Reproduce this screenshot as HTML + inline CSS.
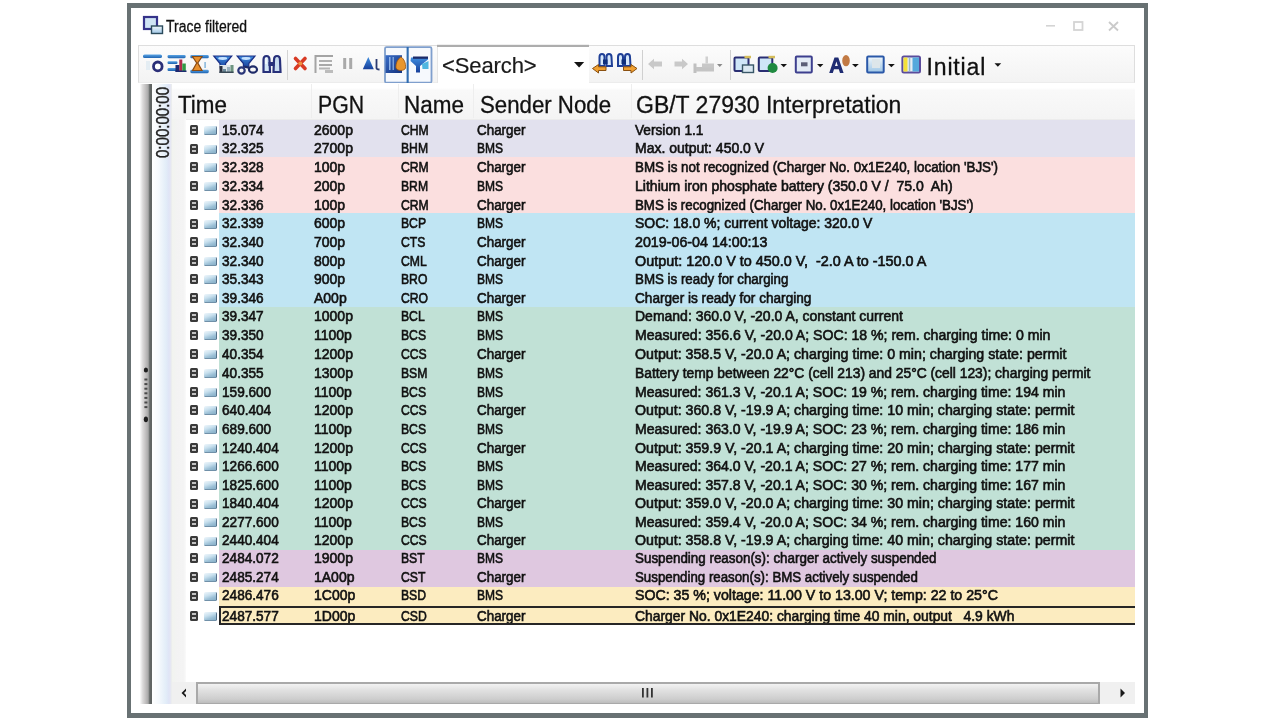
<!DOCTYPE html>
<html><head><meta charset="utf-8"><title>Trace filtered</title>
<style>
*{box-sizing:border-box}
html,body{margin:0;padding:0}
body{width:1280px;height:721px;background:#fff;position:relative;overflow:hidden;font-family:"Liberation Sans",sans-serif;color:#1a1a1a}
.a{position:absolute}
.frame{left:127px;top:3px;width:1021px;height:715px;border:4px solid #687173;border-top-width:5px;border-bottom-width:5px;background:#fff}
.title{left:166px;top:17px;font-size:16px;line-height:20px;white-space:pre;color:#111;transform-origin:0 0;transform:scaleX(0.872);-webkit-text-stroke:0.3px #111}
.tb{left:138px;top:45px;width:997px;height:38px;border:1px solid #dedede;border-bottom-color:#ececec;background:linear-gradient(#fcfcfc,#f3f3f3)}
.sep{width:1px;background:#d4d4d4}
.search{left:437px;top:45px;width:152px;height:38px;background:#fff;border-top:2px solid #b8b8b8;border-left:1px solid #e2e2e2}
.itxt{left:926.5px;top:54px;font-size:23px;line-height:26px;white-space:pre;color:#111;letter-spacing:0.85px;-webkit-text-stroke:0.3px #111}
.stxt{left:442px;top:53px;font-size:22px;line-height:26px;white-space:pre;color:#1a1a1a;letter-spacing:-0.1px;-webkit-text-stroke:0.2px #111}
.hdr{left:171px;top:83px;width:964px;height:37px;background:linear-gradient(#ffffff 0%,#ffffff 14%,#f9f9f9 20%,#f4f4f4 100%);border-bottom:1px solid #ececec}
.hsep{top:84px;width:1px;height:34px;background:#eeeeee}
.ht{top:92px;font-size:23px;line-height:26px;white-space:pre;color:#111;transform-origin:0 0;-webkit-text-stroke:0.3px #111}
.tree{left:171px;top:119px;width:15px;height:563px;background:linear-gradient(90deg,#f1f4ee,#f3f3f3 40%,#f4f4f4 85%,#fafafa)}
.row{left:219px;width:916px}
.c{transform-origin:0 0;font-size:14px;white-space:pre;color:#111;-webkit-text-stroke:0.6px #111}
.gbar{left:140px;top:84px;width:11.5px;height:620px;background:linear-gradient(90deg,#fbfbfb 0%,#dcdbdb 22%,#c4c2c2 45%,#a9a9a9 68%,#626665 82%,#5f6362 100%)}
.lblue{left:151.5px;top:84px;width:20px;height:620px;background:linear-gradient(90deg,#fff 0%,#f4f8fc 35%,#e2edf8 70%,#dfe4f6 85%,#e8e8f2 95%,#eef2ea 100%)}
.vlabel{left:153.5px;top:158px;transform-origin:0 0;transform:rotate(-90deg) scaleX(0.835);font-size:18px;line-height:18px;-webkit-text-stroke:0.45px #222;white-space:pre;color:#222}
.sb{top:682px;height:22px}
.xb{width:8.5px;height:10px;background:#3a3a3a;border-radius:1.5px}
.xb:before{content:"";position:absolute;left:2px;top:1.6px;width:4.3px;height:2.4px;background:#c4c4c4}
.xb:after{content:"";position:absolute;left:2px;top:5.8px;width:4.3px;height:2.4px;background:#c4c4c4}
.mi{width:13px;height:9px;border-radius:1.5px;background:linear-gradient(160deg,#f2f8fc 0%,#c8e0ee 40%,#9cc0d6 70%,#86aec6 100%);border-right:1.5px solid #55708a;border-bottom:1px solid #7090a8}
.sel{left:219px;width:916px;border:2px solid #262626;border-right:none}
.sbtn{background:#f0f0f0}
.thumb{left:196px;top:682px;width:904px;height:22px;border:2px solid #a9a9a9;border-bottom-width:1px;background:linear-gradient(#f2f2f2,#e2e2e2 30%,#cdcdcd 80%,#bdbdbd)}

</style></head>
<body>
<div class="a" style="left:0;top:0;width:1280px;height:721px;overflow:hidden;filter:blur(0.4px)">
<div class="a frame"></div>
<div class="a title">Trace filtered</div>
<div class="a tb"></div>
<svg class="a" style="left:0;top:0" width="1280" height="90" viewBox="0 0 1280 90">
<defs>
<linearGradient id="gb" x1="0" y1="0" x2="0" y2="1"><stop offset="0" stop-color="#5aa4e4"/><stop offset="1" stop-color="#1d62b0"/></linearGradient>
<linearGradient id="gf" x1="0" y1="0" x2="0" y2="1"><stop offset="0" stop-color="#3f8ee0"/><stop offset="1" stop-color="#173f9a"/></linearGradient>
<linearGradient id="gl" x1="0" y1="0" x2="0" y2="1"><stop offset="0" stop-color="#f2f8fc"/><stop offset="1" stop-color="#9ec6e6"/></linearGradient>
<linearGradient id="gsq" x1="0" y1="0" x2="1" y2="1"><stop offset="0" stop-color="#3a6ec8"/><stop offset="1" stop-color="#12327e"/></linearGradient>
</defs>
<!-- title icon -->
<rect x="144" y="17" width="13" height="12" fill="#cfe4f4" stroke="#35338a" stroke-width="2.2"/>
<rect x="151.5" y="26" width="11" height="7.5" fill="url(#gl)" stroke="#2c4b5c" stroke-width="1.4"/>
<!-- window controls -->
<rect x="1046" y="25" width="9" height="1.6" fill="#d4d4d4"/>
<rect x="1074" y="22" width="8.5" height="8" fill="none" stroke="#d4d4d4" stroke-width="1.8"/>
<path d="M1109 22 L1118 30.5 M1118 22 L1109 30.5" stroke="#cacaca" stroke-width="1.8"/>
<!-- icon1 -->
<rect x="143" y="54.5" width="19" height="3.6" rx="1.6" fill="url(#gb)"/>
<rect x="146" y="61" width="4" height="9" fill="#e4edf3"/>
<ellipse cx="157.8" cy="66.4" rx="4.3" ry="4.4" fill="#fff" stroke="#2b2f78" stroke-width="2.8"/>
<!-- icon2 -->
<rect x="167.5" y="55" width="18.2" height="3.2" rx="1.4" fill="url(#gb)"/>
<rect x="167.5" y="61.2" width="10" height="2.8" rx="1.2" fill="url(#gb)"/>
<rect x="167.5" y="68" width="10" height="2.9" rx="1.2" fill="url(#gb)"/>
<rect x="175.5" y="65" width="4" height="6.8" fill="#1e2a70"/>
<rect x="179.3" y="59.5" width="3" height="12.3" fill="#b02a4a"/>
<rect x="182.3" y="63.5" width="3.5" height="8.3" fill="#2e9a44"/>
<rect x="175.5" y="70.5" width="11" height="1.5" fill="#1e2a70"/>
<!-- icon3 -->
<rect x="190.3" y="55" width="18.5" height="3.3" rx="1.4" fill="url(#gb)"/>
<rect x="190.3" y="69.8" width="18.5" height="3.4" rx="1.4" fill="url(#gb)"/>
<path d="M192.5 56.5 L202 56.5 L197.8 63 L202 70.5 L192.5 70.5 L196.7 63 Z" fill="#e8902e" stroke="#8a4a12" stroke-width="1.2"/>
<rect x="204.3" y="62" width="1.6" height="6" fill="#8ab8dc"/>
<!-- icon4 funnel -->
<path d="M213.8 56 L231.7 56 L225.5 63.5 L225.5 68 L220 68 L220 63.5 Z" fill="url(#gf)" stroke="#1a2f86" stroke-width="1.2"/>
<ellipse cx="222.7" cy="58.5" rx="4.5" ry="1.4" fill="#c6e2ff"/>
<rect x="219.5" y="65" width="14" height="8" fill="#dfe6ea"/>
<rect x="219.5" y="66" width="3" height="7" fill="#2a3040"/>
<rect x="223" y="69" width="3" height="4" fill="#6a8a9a"/>
<rect x="227" y="67" width="3" height="6" fill="#9ab0bc"/>
<rect x="230.5" y="65" width="3" height="8" fill="#6f9580"/>
<rect x="219.5" y="71.5" width="14" height="1.5" fill="#3a4a56"/>
<!-- icon5 funnel+scissors -->
<path d="M237.2 56 L255 56 L248.8 63.5 L248.8 67 L243.4 67 L243.4 63.5 Z" fill="url(#gf)" stroke="#1a2f86" stroke-width="1.2"/>
<ellipse cx="246" cy="58.5" rx="4.5" ry="1.4" fill="#c6e2ff"/>
<circle cx="241.5" cy="70.5" r="3.2" fill="none" stroke="#2a3678" stroke-width="2.2"/>
<ellipse cx="253" cy="69.5" rx="4" ry="3.2" fill="none" stroke="#1e2a68" stroke-width="2.2"/>
<path d="M244 66.5 L249.5 68" stroke="#1e2a68" stroke-width="2"/>
<!-- icon6 binoculars -->
<path d="M263.5 72 L263.5 60 Q263.5 56 266.5 56 Q269.5 56 269.5 60 L270 72 Z" fill="#d4e6f6" stroke="#27307a" stroke-width="2.2"/>
<path d="M273.5 72 L274 60 Q274 56 277 56 Q280 56 280 60 L280.5 72 Z" fill="#c8dcf0" stroke="#27307a" stroke-width="2.2"/>
<rect x="268.5" y="62" width="6" height="4" fill="#27307a"/>
<rect x="265.2" y="58" width="1.6" height="6" fill="#ffffff" opacity="0.8"/>
<!-- sep -->
<rect x="287" y="50" width="1" height="30" fill="#d4d4d4"/>
<!-- red X -->
<path d="M295.5 58.5 L305 68.5 M305 58.5 L295.5 68.5" stroke="#d83a24" stroke-width="3.6" stroke-linecap="round"/>
<circle cx="300.3" cy="63.5" r="2" fill="#f09040"/>
<!-- gray icon -->
<path d="M333 56 L315.5 56 L315.5 73" fill="none" stroke="#a4a4a4" stroke-width="2"/>
<rect x="319" y="60" width="13" height="2" fill="#b0b0b0"/>
<rect x="319" y="64" width="13" height="2" fill="#a8a8a8"/>
<rect x="319" y="67.5" width="11" height="2" fill="#b4b4b4"/>
<rect x="325" y="70" width="8" height="3" fill="#bcbcbc"/>
<!-- pause -->
<rect x="343.2" y="58" width="3" height="11" fill="#a9a9a9"/>
<rect x="349.2" y="58" width="3" height="11" fill="#a9a9a9"/>
<!-- triangle At -->
<path d="M368.3 57 L373.8 69.2 L362.8 69.2 Z" fill="url(#gf)"/>
<path d="M376.5 59 L376.5 68 Q376.5 69.5 379.5 69.5" fill="none" stroke="#2a3a70" stroke-width="1.8"/>
<!-- pressed group -->
<rect x="385" y="47.2" width="46.5" height="35.5" rx="1.5" fill="#f6f9fd" stroke="#7f9fcd" stroke-width="1.8"/>
<rect x="406.6" y="47" width="2.1" height="36" fill="#2f6cb0"/>
<rect x="385.5" y="55.2" width="16.5" height="17.8" fill="url(#gsq)"/>
<rect x="389" y="57" width="1.5" height="13" fill="#8fb4e8"/>
<rect x="392.5" y="57" width="1.5" height="13" fill="#7aa2dc"/>
<path d="M401 56.8 C404 59 406 63 405.5 68 C405 71 397 71.5 396 68 C395.5 63 398 59 401 56.8 Z" fill="#e8962e" stroke="#9a5412" stroke-width="0.8"/>
<path d="M411 57.5 L428 57.5 L428 59.5 L420 66 L420 72.5 L416 72.5 L416 66 L410.5 61 Z" fill="url(#gf)"/>
<rect x="413" y="56.5" width="15" height="2.3" fill="#1a2a6a"/>
<path d="M422 64 L428.5 61 L428.5 69 L422.5 69 Z" fill="#4fb6e0"/>
<!-- search box -->
<rect x="437" y="45" width="152" height="38" fill="#fff"/>
<rect x="437" y="44.8" width="152" height="2.2" fill="#adadad"/>
<rect x="437" y="47" width="1" height="36" fill="#e6e6e6"/>
<path d="M574 62 L584.2 62 L579.1 67.5 Z" fill="#141414"/>
<!-- binoculars -->
<path d="M599.5 66 L599.5 57 Q599.5 54 602 54 Q604.5 54 604.5 57 L604.5 66 Z" fill="#d6e8fa" stroke="#1f3f96" stroke-width="2"/>
<path d="M606.5 66 L606.5 57 Q606.5 54 609 54 Q611.5 54 611.5 57 L612 66 Z" fill="#d6e8fa" stroke="#1f3f96" stroke-width="2"/>
<rect x="603" y="59.5" width="4.5" height="4.5" fill="#0f2f7a"/>
<path d="M592.5 68.5 L598.5 64.5 L598.5 66.8 L606 66.8 L606 70.5 L598.5 70.5 L598.5 73 Z" fill="#f0a030" stroke="#8a5010" stroke-width="1"/>
<path d="M618 66 L618 57 Q618 54 620.5 54 Q623 54 623 57 L623 66 Z" fill="#d6e8fa" stroke="#1f3f96" stroke-width="2"/>
<path d="M625 66 L625 57 Q625 54 627.5 54 Q630 54 630 57 L630.5 66 Z" fill="#d6e8fa" stroke="#1f3f96" stroke-width="2"/>
<rect x="621.5" y="59.5" width="4.5" height="4.5" fill="#0f2f7a"/>
<path d="M637 68.5 L631 64.5 L631 66.8 L623.5 66.8 L623.5 70.5 L631 70.5 L631 73 Z" fill="#f0a030" stroke="#8a5010" stroke-width="1"/>
<!-- sep -->
<rect x="642" y="50" width="1" height="30" fill="#d0d0d0"/>
<!-- gray arrows -->
<path d="M648 64 L654 58.8 L654 61.5 L662 61.5 L662 66.5 L654 66.5 L654 69.2 Z" fill="#c9c9c9"/>
<path d="M688 64 L682 58.8 L682 61.5 L674.5 61.5 L674.5 66.5 L682 66.5 L682 69.2 Z" fill="#c9c9c9"/>
<rect x="693.5" y="63.5" width="3" height="9.5" fill="#c0c0c0"/>
<rect x="696" y="67" width="18" height="4.5" fill="#c4c4c4"/>
<rect x="702" y="63.5" width="12" height="4" fill="#c8c8c8"/>
<rect x="705.5" y="56.5" width="2.5" height="7" fill="#d0d0d0"/>
<path d="M717 64 L722.5 64 L719.75 67 Z" fill="#8a8a8a"/>
<rect x="730" y="50" width="1" height="30" fill="#d0d0d0"/>
<!-- folder1 -->
<rect x="734.5" y="57.5" width="14" height="13.5" rx="1" fill="#cfe6f8" stroke="#2a2e72" stroke-width="2"/>
<rect x="744.5" y="55.8" width="6.5" height="2.5" fill="#d4bc5a"/>
<rect x="742.5" y="65" width="11" height="7.5" fill="#dbe9f2" stroke="#3a5868" stroke-width="1.4"/>
<!-- folder2 -->
<rect x="758.8" y="57.5" width="13.5" height="13.5" rx="1" fill="#cfe6f8" stroke="#2a2e72" stroke-width="2"/>
<rect x="768.5" y="55.8" width="6.5" height="2.5" fill="#d4bc5a"/>
<circle cx="772.6" cy="68" r="5" fill="#1f8a40"/>
<path d="M780.5 64 L787 64 L783.75 67.3 Z" fill="#141414"/>
<!-- box icon -->
<rect x="795.8" y="56.4" width="16" height="16" rx="1" fill="#e3ecf6" stroke="#3d3f8e" stroke-width="2"/>
<rect x="801" y="62.3" width="6.5" height="4" fill="#5a5f78"/>
<path d="M817 64 L823.4 64 L820.2 67.3 Z" fill="#141414"/>
<!-- A icon -->
<path d="M829.2 73 L834.5 57.5 L838.3 57.5 L843.6 73 L840 73 L838.8 69.3 L834 69.3 L832.8 73 Z M835 66 L837.8 66 L836.4 61.5 Z" fill="#1f2c72" fill-rule="evenodd"/>
<ellipse cx="846" cy="60.7" rx="3.8" ry="5.6" fill="#c27a44"/>
<path d="M852 64 L858.8 64 L855.4 67.3 Z" fill="#141414"/>
<!-- box icon 2 -->
<rect x="867.2" y="56.4" width="16.5" height="16" rx="1" fill="url(#gl)" stroke="#2a58a8" stroke-width="2"/>
<rect x="872" y="59" width="8" height="9" fill="#dde6ea"/>
<path d="M888 64 L894.8 64 L891.4 67.3 Z" fill="#141414"/>
<!-- columns icon -->
<rect x="902.4" y="56.4" width="17.6" height="16" rx="1.5" fill="#e6eef4" stroke="#5b4c9c" stroke-width="2"/>
<rect x="903.5" y="57.5" width="4" height="14" fill="#f4e038"/>
<rect x="908.8" y="57.5" width="1.5" height="14" fill="#9ab8c8"/>
<rect x="912.5" y="57.5" width="6.5" height="14" fill="#54a8dc"/>
<path d="M994.5 63.2 L1001.2 63.2 L997.85 66.8 Z" fill="#141414"/>
</svg>

<div class="a stxt">&lt;Search&gt;</div>
<div class="a itxt">Initial</div>
<div class="a hdr"></div>
<div class="a hsep" style="left:311px"></div>
<div class="a hsep" style="left:398px"></div>
<div class="a hsep" style="left:473px"></div>
<div class="a hsep" style="left:631px"></div>
<div class="a ht" style="left:177.5px;transform:scaleX(0.9748)">Time</div>
<div class="a ht" style="left:317.5px;transform:scaleX(0.9229)">PGN</div>
<div class="a ht" style="left:403.5px;transform:scaleX(0.9778)">Name</div>
<div class="a ht" style="left:479.5px;transform:scaleX(0.9665)">Sender Node</div>
<div class="a ht" style="left:635.5px;transform:scaleX(0.9995)">GB/T 27930 Interpretation</div>
<div class="a tree"></div>
<div class="a gbar"></div>
<div class="a lblue"></div>
<div class="a vlabel">0:00:00:00</div>
<div class="a row" style="top:120px;height:19px;background:#e2e1ee"></div>
<div class="a c" style="left:222px;top:121.70px;line-height:16px;transform:scaleX(0.9720)">15.074</div>
<div class="a c" style="left:314px;top:121.70px;line-height:16px;transform:scaleX(1.0000)">2600p</div>
<div class="a c" style="left:401px;top:121.70px;line-height:16px;transform:scaleX(0.8700)">CHM</div>
<div class="a c" style="left:476.5px;top:121.70px;line-height:16px;transform:scaleX(0.9570)">Charger</div>
<div class="a c" style="left:634.5px;top:121.70px;line-height:16px;transform:scaleX(0.9763)">Version 1.1</div>
<div class="a row" style="top:139px;height:18px;background:#e2e1ee"></div>
<div class="a c" style="left:222px;top:140.44px;line-height:16px;transform:scaleX(0.9720)">32.325</div>
<div class="a c" style="left:314px;top:140.44px;line-height:16px;transform:scaleX(1.0000)">2700p</div>
<div class="a c" style="left:401px;top:140.44px;line-height:16px;transform:scaleX(0.8700)">BHM</div>
<div class="a c" style="left:476.5px;top:140.44px;line-height:16px;transform:scaleX(0.8570)">BMS</div>
<div class="a c" style="left:634.5px;top:140.44px;line-height:16px;transform:scaleX(0.9992)">Max. output: 450.0 V</div>
<div class="a row" style="top:157px;height:19px;background:#fbdfdf"></div>
<div class="a c" style="left:222px;top:159.18px;line-height:16px;transform:scaleX(0.9720)">32.328</div>
<div class="a c" style="left:314px;top:159.18px;line-height:16px;transform:scaleX(1.0000)">100p</div>
<div class="a c" style="left:401px;top:159.18px;line-height:16px;transform:scaleX(0.8700)">CRM</div>
<div class="a c" style="left:476.5px;top:159.18px;line-height:16px;transform:scaleX(0.9570)">Charger</div>
<div class="a c" style="left:634.5px;top:159.18px;line-height:16px;transform:scaleX(0.9562)">BMS is not recognized (Charger No. 0x1E240, location &#39;BJS&#39;)</div>
<div class="a row" style="top:176px;height:19px;background:#fbdfdf"></div>
<div class="a c" style="left:222px;top:177.92px;line-height:16px;transform:scaleX(0.9720)">32.334</div>
<div class="a c" style="left:314px;top:177.92px;line-height:16px;transform:scaleX(1.0000)">200p</div>
<div class="a c" style="left:401px;top:177.92px;line-height:16px;transform:scaleX(0.8700)">BRM</div>
<div class="a c" style="left:476.5px;top:177.92px;line-height:16px;transform:scaleX(0.8570)">BMS</div>
<div class="a c" style="left:634.5px;top:177.92px;line-height:16px;transform:scaleX(1.0030)">Lithium iron phosphate battery (350.0 V /  75.0  Ah)</div>
<div class="a row" style="top:195px;height:18px;background:#fbdfdf"></div>
<div class="a c" style="left:222px;top:196.66px;line-height:16px;transform:scaleX(0.9720)">32.336</div>
<div class="a c" style="left:314px;top:196.66px;line-height:16px;transform:scaleX(1.0000)">100p</div>
<div class="a c" style="left:401px;top:196.66px;line-height:16px;transform:scaleX(0.8700)">CRM</div>
<div class="a c" style="left:476.5px;top:196.66px;line-height:16px;transform:scaleX(0.9570)">Charger</div>
<div class="a c" style="left:634.5px;top:196.66px;line-height:16px;transform:scaleX(0.9498)">BMS is recognized (Charger No. 0x1E240, location &#39;BJS&#39;)</div>
<div class="a row" style="top:213px;height:19px;background:#c0e5f3"></div>
<div class="a c" style="left:222px;top:215.40px;line-height:16px;transform:scaleX(0.9720)">32.339</div>
<div class="a c" style="left:314px;top:215.40px;line-height:16px;transform:scaleX(1.0000)">600p</div>
<div class="a c" style="left:401px;top:215.40px;line-height:16px;transform:scaleX(0.8700)">BCP</div>
<div class="a c" style="left:476.5px;top:215.40px;line-height:16px;transform:scaleX(0.8570)">BMS</div>
<div class="a c" style="left:634.5px;top:215.40px;line-height:16px;transform:scaleX(0.9969)">SOC: 18.0 %; current voltage: 320.0 V</div>
<div class="a row" style="top:232px;height:19px;background:#c0e5f3"></div>
<div class="a c" style="left:222px;top:234.00px;line-height:16px;transform:scaleX(0.9720)">32.340</div>
<div class="a c" style="left:314px;top:234.00px;line-height:16px;transform:scaleX(1.0000)">700p</div>
<div class="a c" style="left:401px;top:234.00px;line-height:16px;transform:scaleX(0.8700)">CTS</div>
<div class="a c" style="left:476.5px;top:234.00px;line-height:16px;transform:scaleX(0.9570)">Charger</div>
<div class="a c" style="left:634.5px;top:234.00px;line-height:16px;transform:scaleX(1.0185)">2019-06-04 14:00:13</div>
<div class="a row" style="top:251px;height:18px;background:#c0e5f3"></div>
<div class="a c" style="left:222px;top:252.60px;line-height:16px;transform:scaleX(0.9720)">32.340</div>
<div class="a c" style="left:314px;top:252.60px;line-height:16px;transform:scaleX(1.0000)">800p</div>
<div class="a c" style="left:401px;top:252.60px;line-height:16px;transform:scaleX(0.8700)">CML</div>
<div class="a c" style="left:476.5px;top:252.60px;line-height:16px;transform:scaleX(0.9570)">Charger</div>
<div class="a c" style="left:634.5px;top:252.60px;line-height:16px;transform:scaleX(1.0275)">Output: 120.0 V to 450.0 V,  -2.0 A to -150.0 A</div>
<div class="a row" style="top:269px;height:19px;background:#c0e5f3"></div>
<div class="a c" style="left:222px;top:271.20px;line-height:16px;transform:scaleX(0.9720)">35.343</div>
<div class="a c" style="left:314px;top:271.20px;line-height:16px;transform:scaleX(1.0000)">900p</div>
<div class="a c" style="left:401px;top:271.20px;line-height:16px;transform:scaleX(0.8700)">BRO</div>
<div class="a c" style="left:476.5px;top:271.20px;line-height:16px;transform:scaleX(0.8570)">BMS</div>
<div class="a c" style="left:634.5px;top:271.20px;line-height:16px;transform:scaleX(0.9523)">BMS is ready for charging</div>
<div class="a row" style="top:288px;height:19px;background:#c0e5f3"></div>
<div class="a c" style="left:222px;top:289.80px;line-height:16px;transform:scaleX(0.9720)">39.346</div>
<div class="a c" style="left:314px;top:289.80px;line-height:16px;transform:scaleX(1.0000)">A00p</div>
<div class="a c" style="left:401px;top:289.80px;line-height:16px;transform:scaleX(0.8700)">CRO</div>
<div class="a c" style="left:476.5px;top:289.80px;line-height:16px;transform:scaleX(0.9570)">Charger</div>
<div class="a c" style="left:634.5px;top:289.80px;line-height:16px;transform:scaleX(0.9729)">Charger is ready for charging</div>
<div class="a row" style="top:307px;height:18px;background:#c1e1d6"></div>
<div class="a c" style="left:222px;top:308.40px;line-height:16px;transform:scaleX(0.9720)">39.347</div>
<div class="a c" style="left:314px;top:308.40px;line-height:16px;transform:scaleX(1.0000)">1000p</div>
<div class="a c" style="left:401px;top:308.40px;line-height:16px;transform:scaleX(0.8700)">BCL</div>
<div class="a c" style="left:476.5px;top:308.40px;line-height:16px;transform:scaleX(0.8570)">BMS</div>
<div class="a c" style="left:634.5px;top:308.40px;line-height:16px;transform:scaleX(0.9997)">Demand: 360.0 V, -20.0 A, constant current</div>
<div class="a row" style="top:325px;height:19px;background:#c1e1d6"></div>
<div class="a c" style="left:222px;top:326.80px;line-height:16px;transform:scaleX(0.9720)">39.350</div>
<div class="a c" style="left:314px;top:326.80px;line-height:16px;transform:scaleX(1.0000)">1100p</div>
<div class="a c" style="left:401px;top:326.80px;line-height:16px;transform:scaleX(0.8700)">BCS</div>
<div class="a c" style="left:476.5px;top:326.80px;line-height:16px;transform:scaleX(0.8570)">BMS</div>
<div class="a c" style="left:634.5px;top:326.80px;line-height:16px;transform:scaleX(1.0066)">Measured: 356.6 V, -20.0 A; SOC: 18 %; rem. charging time: 0 min</div>
<div class="a row" style="top:344px;height:19px;background:#c1e1d6"></div>
<div class="a c" style="left:222px;top:345.80px;line-height:16px;transform:scaleX(0.9720)">40.354</div>
<div class="a c" style="left:314px;top:345.80px;line-height:16px;transform:scaleX(1.0000)">1200p</div>
<div class="a c" style="left:401px;top:345.80px;line-height:16px;transform:scaleX(0.8700)">CCS</div>
<div class="a c" style="left:476.5px;top:345.80px;line-height:16px;transform:scaleX(0.9570)">Charger</div>
<div class="a c" style="left:634.5px;top:345.80px;line-height:16px;transform:scaleX(1.0146)">Output: 358.5 V, -20.0 A; charging time: 0 min; charging state: permit</div>
<div class="a row" style="top:363px;height:19px;background:#c1e1d6"></div>
<div class="a c" style="left:222px;top:364.80px;line-height:16px;transform:scaleX(0.9720)">40.355</div>
<div class="a c" style="left:314px;top:364.80px;line-height:16px;transform:scaleX(1.0000)">1300p</div>
<div class="a c" style="left:401px;top:364.80px;line-height:16px;transform:scaleX(0.8700)">BSM</div>
<div class="a c" style="left:476.5px;top:364.80px;line-height:16px;transform:scaleX(0.8570)">BMS</div>
<div class="a c" style="left:634.5px;top:364.80px;line-height:16px;transform:scaleX(0.9879)">Battery temp between 22°C (cell 213) and 25°C (cell 123); charging permit</div>
<div class="a row" style="top:382px;height:18px;background:#c1e1d6"></div>
<div class="a c" style="left:222px;top:383.60px;line-height:16px;transform:scaleX(0.9720)">159.600</div>
<div class="a c" style="left:314px;top:383.60px;line-height:16px;transform:scaleX(1.0000)">1100p</div>
<div class="a c" style="left:401px;top:383.60px;line-height:16px;transform:scaleX(0.8700)">BCS</div>
<div class="a c" style="left:476.5px;top:383.60px;line-height:16px;transform:scaleX(0.8570)">BMS</div>
<div class="a c" style="left:634.5px;top:383.60px;line-height:16px;transform:scaleX(1.0050)">Measured: 361.3 V, -20.1 A; SOC: 19 %; rem. charging time: 194 min</div>
<div class="a row" style="top:400px;height:19px;background:#c1e1d6"></div>
<div class="a c" style="left:222px;top:402.30px;line-height:16px;transform:scaleX(0.9720)">640.404</div>
<div class="a c" style="left:314px;top:402.30px;line-height:16px;transform:scaleX(1.0000)">1200p</div>
<div class="a c" style="left:401px;top:402.30px;line-height:16px;transform:scaleX(0.8700)">CCS</div>
<div class="a c" style="left:476.5px;top:402.30px;line-height:16px;transform:scaleX(0.9570)">Charger</div>
<div class="a c" style="left:634.5px;top:402.30px;line-height:16px;transform:scaleX(1.0149)">Output: 360.8 V, -19.9 A; charging time: 10 min; charging state: permit</div>
<div class="a row" style="top:419px;height:19px;background:#c1e1d6"></div>
<div class="a c" style="left:222px;top:420.90px;line-height:16px;transform:scaleX(0.9720)">689.600</div>
<div class="a c" style="left:314px;top:420.90px;line-height:16px;transform:scaleX(1.0000)">1100p</div>
<div class="a c" style="left:401px;top:420.90px;line-height:16px;transform:scaleX(0.8700)">BCS</div>
<div class="a c" style="left:476.5px;top:420.90px;line-height:16px;transform:scaleX(0.8570)">BMS</div>
<div class="a c" style="left:634.5px;top:420.90px;line-height:16px;transform:scaleX(1.0050)">Measured: 363.0 V, -19.9 A; SOC: 23 %; rem. charging time: 186 min</div>
<div class="a row" style="top:438px;height:18px;background:#c1e1d6"></div>
<div class="a c" style="left:222px;top:439.53px;line-height:16px;transform:scaleX(0.9720)">1240.404</div>
<div class="a c" style="left:314px;top:439.53px;line-height:16px;transform:scaleX(1.0000)">1200p</div>
<div class="a c" style="left:401px;top:439.53px;line-height:16px;transform:scaleX(0.8700)">CCS</div>
<div class="a c" style="left:476.5px;top:439.53px;line-height:16px;transform:scaleX(0.9570)">Charger</div>
<div class="a c" style="left:634.5px;top:439.53px;line-height:16px;transform:scaleX(1.0149)">Output: 359.9 V, -20.1 A; charging time: 20 min; charging state: permit</div>
<div class="a row" style="top:456px;height:19px;background:#c1e1d6"></div>
<div class="a c" style="left:222px;top:458.17px;line-height:16px;transform:scaleX(0.9720)">1266.600</div>
<div class="a c" style="left:314px;top:458.17px;line-height:16px;transform:scaleX(1.0000)">1100p</div>
<div class="a c" style="left:401px;top:458.17px;line-height:16px;transform:scaleX(0.8700)">BCS</div>
<div class="a c" style="left:476.5px;top:458.17px;line-height:16px;transform:scaleX(0.8570)">BMS</div>
<div class="a c" style="left:634.5px;top:458.17px;line-height:16px;transform:scaleX(1.0050)">Measured: 364.0 V, -20.1 A; SOC: 27 %; rem. charging time: 177 min</div>
<div class="a row" style="top:475px;height:19px;background:#c1e1d6"></div>
<div class="a c" style="left:222px;top:476.80px;line-height:16px;transform:scaleX(0.9720)">1825.600</div>
<div class="a c" style="left:314px;top:476.80px;line-height:16px;transform:scaleX(1.0000)">1100p</div>
<div class="a c" style="left:401px;top:476.80px;line-height:16px;transform:scaleX(0.8700)">BCS</div>
<div class="a c" style="left:476.5px;top:476.80px;line-height:16px;transform:scaleX(0.8570)">BMS</div>
<div class="a c" style="left:634.5px;top:476.80px;line-height:16px;transform:scaleX(1.0050)">Measured: 357.8 V, -20.1 A; SOC: 30 %; rem. charging time: 167 min</div>
<div class="a row" style="top:494px;height:18px;background:#c1e1d6"></div>
<div class="a c" style="left:222px;top:495.40px;line-height:16px;transform:scaleX(0.9720)">1840.404</div>
<div class="a c" style="left:314px;top:495.40px;line-height:16px;transform:scaleX(1.0000)">1200p</div>
<div class="a c" style="left:401px;top:495.40px;line-height:16px;transform:scaleX(0.8700)">CCS</div>
<div class="a c" style="left:476.5px;top:495.40px;line-height:16px;transform:scaleX(0.9570)">Charger</div>
<div class="a c" style="left:634.5px;top:495.40px;line-height:16px;transform:scaleX(1.0149)">Output: 359.0 V, -20.0 A; charging time: 30 min; charging state: permit</div>
<div class="a row" style="top:512px;height:19px;background:#c1e1d6"></div>
<div class="a c" style="left:222px;top:513.90px;line-height:16px;transform:scaleX(0.9720)">2277.600</div>
<div class="a c" style="left:314px;top:513.90px;line-height:16px;transform:scaleX(1.0000)">1100p</div>
<div class="a c" style="left:401px;top:513.90px;line-height:16px;transform:scaleX(0.8700)">BCS</div>
<div class="a c" style="left:476.5px;top:513.90px;line-height:16px;transform:scaleX(0.8570)">BMS</div>
<div class="a c" style="left:634.5px;top:513.90px;line-height:16px;transform:scaleX(1.0050)">Measured: 359.4 V, -20.0 A; SOC: 34 %; rem. charging time: 160 min</div>
<div class="a row" style="top:531px;height:19px;background:#c1e1d6"></div>
<div class="a c" style="left:222px;top:532.40px;line-height:16px;transform:scaleX(0.9720)">2440.404</div>
<div class="a c" style="left:314px;top:532.40px;line-height:16px;transform:scaleX(1.0000)">1200p</div>
<div class="a c" style="left:401px;top:532.40px;line-height:16px;transform:scaleX(0.8700)">CCS</div>
<div class="a c" style="left:476.5px;top:532.40px;line-height:16px;transform:scaleX(0.9570)">Charger</div>
<div class="a c" style="left:634.5px;top:532.40px;line-height:16px;transform:scaleX(1.0149)">Output: 358.8 V, -19.9 A; charging time: 40 min; charging state: permit</div>
<div class="a row" style="top:550px;height:18px;background:#dfc8e0"></div>
<div class="a c" style="left:222px;top:550.30px;line-height:16px;transform:scaleX(0.9720)">2484.072</div>
<div class="a c" style="left:314px;top:550.30px;line-height:16px;transform:scaleX(1.0000)">1900p</div>
<div class="a c" style="left:401px;top:550.30px;line-height:16px;transform:scaleX(0.8700)">BST</div>
<div class="a c" style="left:476.5px;top:550.30px;line-height:16px;transform:scaleX(0.8570)">BMS</div>
<div class="a c" style="left:634.5px;top:550.30px;line-height:16px;transform:scaleX(0.9563)">Suspending reason(s): charger actively suspended</div>
<div class="a row" style="top:568px;height:19px;background:#dfc8e0"></div>
<div class="a c" style="left:222px;top:569.00px;line-height:16px;transform:scaleX(0.9720)">2485.274</div>
<div class="a c" style="left:314px;top:569.00px;line-height:16px;transform:scaleX(1.0000)">1A00p</div>
<div class="a c" style="left:401px;top:569.00px;line-height:16px;transform:scaleX(0.8700)">CST</div>
<div class="a c" style="left:476.5px;top:569.00px;line-height:16px;transform:scaleX(0.9570)">Charger</div>
<div class="a c" style="left:634.5px;top:569.00px;line-height:16px;transform:scaleX(0.9491)">Suspending reason(s): BMS actively suspended</div>
<div class="a row" style="top:587px;height:19px;background:#fcecc0"></div>
<div class="a c" style="left:222px;top:587.40px;line-height:16px;transform:scaleX(0.9720)">2486.476</div>
<div class="a c" style="left:314px;top:587.40px;line-height:16px;transform:scaleX(1.0000)">1C00p</div>
<div class="a c" style="left:401px;top:587.40px;line-height:16px;transform:scaleX(0.8700)">BSD</div>
<div class="a c" style="left:476.5px;top:587.40px;line-height:16px;transform:scaleX(0.8570)">BMS</div>
<div class="a c" style="left:634.5px;top:587.40px;line-height:16px;transform:scaleX(1.0132)">SOC: 35 %; voltage: 11.00 V to 13.00 V; temp: 22 to 25°C</div>
<div class="a row" style="top:606px;height:18px;background:#fcecc0"></div>
<div class="a c" style="left:222px;top:607.60px;line-height:16px;transform:scaleX(0.9720)">2487.577</div>
<div class="a c" style="left:314px;top:607.60px;line-height:16px;transform:scaleX(1.0000)">1D00p</div>
<div class="a c" style="left:401px;top:607.60px;line-height:16px;transform:scaleX(0.8700)">CSD</div>
<div class="a c" style="left:476.5px;top:607.60px;line-height:16px;transform:scaleX(0.9570)">Charger</div>
<div class="a c" style="left:634.5px;top:607.60px;line-height:16px;transform:scaleX(0.9909)">Charger No. 0x1E240: charging time 40 min, output   4.9 kWh</div>
<div class="a xb" style="left:189.6px;top:125px"></div>
<div class="a mi" style="left:204.2px;top:125.5px"></div>
<div class="a xb" style="left:189.6px;top:144px"></div>
<div class="a mi" style="left:204.2px;top:144.5px"></div>
<div class="a xb" style="left:189.6px;top:162px"></div>
<div class="a mi" style="left:204.2px;top:162.5px"></div>
<div class="a xb" style="left:189.6px;top:181px"></div>
<div class="a mi" style="left:204.2px;top:181.5px"></div>
<div class="a xb" style="left:189.6px;top:200px"></div>
<div class="a mi" style="left:204.2px;top:200.5px"></div>
<div class="a xb" style="left:189.6px;top:219px"></div>
<div class="a mi" style="left:204.2px;top:219.5px"></div>
<div class="a xb" style="left:189.6px;top:237px"></div>
<div class="a mi" style="left:204.2px;top:237.5px"></div>
<div class="a xb" style="left:189.6px;top:256px"></div>
<div class="a mi" style="left:204.2px;top:256.5px"></div>
<div class="a xb" style="left:189.6px;top:274px"></div>
<div class="a mi" style="left:204.2px;top:274.5px"></div>
<div class="a xb" style="left:189.6px;top:293px"></div>
<div class="a mi" style="left:204.2px;top:293.5px"></div>
<div class="a xb" style="left:189.6px;top:312px"></div>
<div class="a mi" style="left:204.2px;top:312.5px"></div>
<div class="a xb" style="left:189.6px;top:330px"></div>
<div class="a mi" style="left:204.2px;top:330.5px"></div>
<div class="a xb" style="left:189.6px;top:349px"></div>
<div class="a mi" style="left:204.2px;top:349.5px"></div>
<div class="a xb" style="left:189.6px;top:368px"></div>
<div class="a mi" style="left:204.2px;top:368.5px"></div>
<div class="a xb" style="left:189.6px;top:387px"></div>
<div class="a mi" style="left:204.2px;top:387.5px"></div>
<div class="a xb" style="left:189.6px;top:405px"></div>
<div class="a mi" style="left:204.2px;top:405.5px"></div>
<div class="a xb" style="left:189.6px;top:424px"></div>
<div class="a mi" style="left:204.2px;top:424.5px"></div>
<div class="a xb" style="left:189.6px;top:443px"></div>
<div class="a mi" style="left:204.2px;top:443.5px"></div>
<div class="a xb" style="left:189.6px;top:461px"></div>
<div class="a mi" style="left:204.2px;top:461.5px"></div>
<div class="a xb" style="left:189.6px;top:480px"></div>
<div class="a mi" style="left:204.2px;top:480.5px"></div>
<div class="a xb" style="left:189.6px;top:499px"></div>
<div class="a mi" style="left:204.2px;top:499.5px"></div>
<div class="a xb" style="left:189.6px;top:517px"></div>
<div class="a mi" style="left:204.2px;top:517.5px"></div>
<div class="a xb" style="left:189.6px;top:536px"></div>
<div class="a mi" style="left:204.2px;top:536.5px"></div>
<div class="a xb" style="left:189.6px;top:553px"></div>
<div class="a mi" style="left:204.2px;top:553.5px"></div>
<div class="a xb" style="left:189.6px;top:572px"></div>
<div class="a mi" style="left:204.2px;top:572.5px"></div>
<div class="a xb" style="left:189.6px;top:591px"></div>
<div class="a mi" style="left:204.2px;top:591.5px"></div>
<div class="a xb" style="left:189.6px;top:611px"></div>
<div class="a mi" style="left:204.2px;top:611.5px"></div>
<div class="a sel" style="top:606px;height:19px"></div>
<div class="a sbtn" style="left:172px;top:682px;width:24px;height:22px"></div>
<svg class="a" style="left:180px;top:688px" width="8" height="10"><path d="M6 0.5 L1.5 5 L6 9.5 L6 7 L4 5 L6 3 Z" fill="#1a1a1a"/></svg>
<div class="a thumb"></div>
<div class="a sbtn" style="left:1100px;top:682px;width:35px;height:22px"></div>
<svg class="a" style="left:1119px;top:688px" width="8" height="10"><path d="M1.5 0.5 L6 5 L1.5 9.5 Z" fill="#1a1a1a"/></svg>
<svg class="a" style="left:641px;top:688px" width="13" height="10"><rect x="1" y="0" width="1.8" height="9.5" fill="#333"/><rect x="5.5" y="0" width="1.8" height="9.5" fill="#333"/><rect x="10" y="0" width="1.8" height="9.5" fill="#333"/></svg>
<svg class="a" style="left:143px;top:367px" width="6" height="57"><ellipse cx="2.9" cy="3" rx="2.1" ry="2.6" fill="#1e1e1e"/><ellipse cx="2.9" cy="52.3" rx="2.1" ry="2.9" fill="#1e1e1e"/><rect x="1.4" y="11.5" width="3" height="2" fill="#4a4a4a"/><rect x="1.4" y="16.1" width="3" height="2" fill="#4a4a4a"/><rect x="1.4" y="20.7" width="3" height="2" fill="#4a4a4a"/><rect x="1.4" y="25.3" width="3" height="2" fill="#4a4a4a"/><rect x="1.4" y="29.9" width="3" height="2" fill="#4a4a4a"/><rect x="1.4" y="34.5" width="3" height="2" fill="#4a4a4a"/><rect x="1.4" y="39.1" width="3" height="2" fill="#4a4a4a"/></svg>
</div>
</body></html>
